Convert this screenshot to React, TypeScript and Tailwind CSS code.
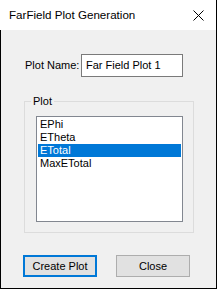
import React from "react";

const font = { fontFamily: '"Liberation Sans", Arial, sans-serif' };

export default function App() {
  const items = ["EPhi", "ETheta", "ETotal", "MaxETotal"];
  return (
    <div className="w-[217px] h-[289px] border-r border-black bg-[#f0f0f0] flex flex-col text-black" style={font}>
      <div className="h-[30px] bg-white flex items-center justify-between pl-[9px] pr-[12px]">
        <span className="text-[11.6px] leading-none whitespace-nowrap">FarField Plot Generation</span>
        <svg width="11" height="11" viewBox="0 0 11 11" className="block">
          <path d="M0.5 0.5 L10.5 10.5 M10.5 0.5 L0.5 10.5" stroke="#000" strokeWidth="1" fill="none" />
        </svg>
      </div>
      <div className="flex-1 border-l border-b border-black flex flex-col">
        <div className="mt-[24px] flex items-center">
          <span className="ml-[24px] w-[56px] shrink-0 text-[11px] leading-none whitespace-nowrap">Plot Name:</span>
          <div className="w-[102px] h-[23px] shrink-0 border border-[#7a7a7a] bg-white flex items-center pl-[4px] text-[11px] leading-none whitespace-nowrap">
            Far Field Plot 1
          </div>
        </div>
        <div className="relative mt-[24px] ml-[23px] w-[170px] border border-[#dcdcdc] pt-[14px] pb-[10px] pl-[11px]">
          <span className="absolute left-[6px] top-[-9px] px-[2px] bg-[#f0f0f0] text-[11px] leading-[16px]">Plot</span>
          <div className="w-[147px] h-[106px] border border-[#828790] bg-white pt-[1px] px-[1px]">
            {items.map((it) => (
              <div
                key={it}
                className={
                  "h-[13px] pl-[2px] text-[11px] leading-[13px] whitespace-nowrap " +
                  (it === "ETotal" ? "bg-[#0078d7] text-white" : "text-black")
                }
              >
                {it}
              </div>
            ))}
          </div>
        </div>
        <div className="mt-[22px] flex">
          <div className="ml-[22px] w-[74px] h-[22px] border-2 border-[#0078d7] bg-[#e1e1e1] flex items-center justify-center text-[11px] leading-none whitespace-nowrap">
            Create Plot
          </div>
          <div className="ml-[19px] w-[74px] h-[22px] border border-[#adadad] bg-[#e1e1e1] flex items-center justify-center text-[11px] leading-none">
            Close
          </div>
        </div>
      </div>
    </div>
  );
}
